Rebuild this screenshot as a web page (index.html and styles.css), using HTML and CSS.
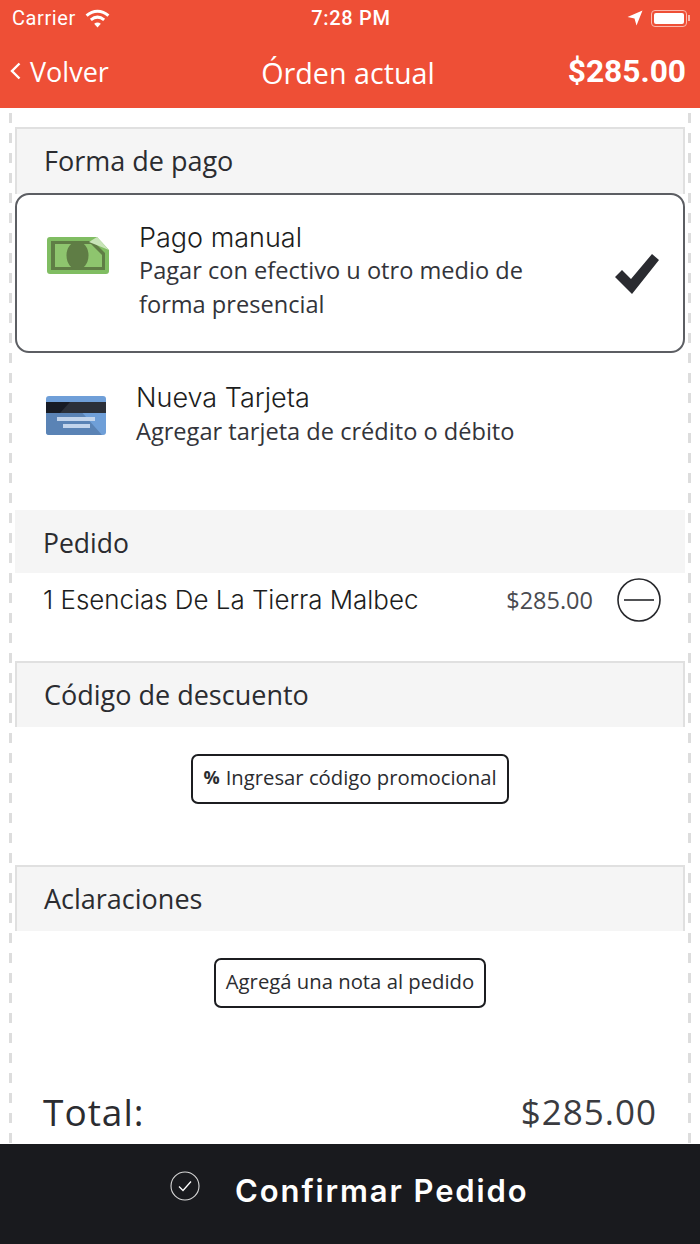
FILE: index.html
```html
<!DOCTYPE html>
<html lang="es">
<head>
    <meta charset="UTF-8">
    <meta name="viewport" content="width=device-width, initial-scale=1.0">
    <link rel="stylesheet" href="styles.css">
    <title>Órden actual</title>
</head>
<body>
  <div class="top">
    <div class="status">
      <div class="status-left">
        <span>Carrier</span>
        <svg class="wifi" width="25" height="19" viewBox="0 0 26 20">
          <path d="M1.5 7C8.5.8 17.5.8 24.5 7" fill="none" stroke="#fff" stroke-width="3.2"/>
          <path d="M6 11.5C10.5 7.8 15.5 7.8 20 11.5" fill="none" stroke="#fff" stroke-width="3.2"/>
          <path d="M9.5 15.5c2.3-1.6 4.7-1.6 7 0L13 19.5z" fill="#fff"/>
        </svg>
      </div>
      <div class="status-time">7:28 PM</div>
      <div class="status-right">
        <svg width="16" height="16" viewBox="0 0 16 16"><path d="M15.5.5L9.5 15.5 7.5 8.5.5 7z" fill="#fff"/></svg>
        <div class="battery"><div class="battery-fill"></div></div>
        <div class="battery-nub"></div>
      </div>
    </div>
    <div class="nav">
      <div class="nav-back">
        <svg width="11" height="18" viewBox="0 0 11 18"><path d="M9.5 1.5L2 9l7.5 7.500" fill="none" stroke="#fff" stroke-width="2.4"/></svg>
        <span>Volver</span>
      </div>
      <div class="nav-title">Órden actual</div>
      <div class="nav-price">$285.00</div>
    </div>
  </div>

  <div class="content">
    <div class="section-head">Forma de pago</div>

    <div class="pay-option selected">
      <svg class="pay-icon" width="62" height="37" viewBox="0 0 62 37">
        <path d="M3 0H50L62 13V34a3 3 0 0 1-3 3H3a3 3 0 0 1-3-3V3a3 3 0 0 1 3-3z" fill="#80bd62"/>
        <path d="M4 4H46L58 16V33H4z" fill="#5f7d45"/>
        <path d="M8 7H44L55 18V30H8z" fill="#8ec56e"/>
        <ellipse cx="30.5" cy="18.5" rx="11" ry="14" fill="#5f7d45"/>
        <path d="M50 0L62 13 42 5z" fill="#c8e4b8"/>
      </svg>
      <div class="pay-text">
        <div class="pay-title">Pago manual</div>
        <div class="pay-desc">Pagar con efectivo u otro medio de<br>forma presencial</div>
      </div>
      <svg class="pay-check" width="46" height="42" viewBox="0 0 46 42"><path d="M1 24L8 17 17 26 38 1 45 7 18 41z" fill="#2a2b30"/></svg>
    </div>

    <div class="pay-option plain">
      <svg class="pay-icon" width="60" height="39" viewBox="0 0 60 39">
        <rect width="60" height="39" rx="3" fill="#6f9fd8"/>
        <path d="M0 36V12H32L56 39H3a3 3 0 0 1-3-3z" fill="#5a83b5"/>
        <rect y="6" width="60" height="11" fill="#2b3039"/>
        <path d="M0 6H24L14 17H0z" fill="#171b24"/>
        <rect x="11" y="21" width="38" height="4" fill="#c3d5ec"/>
        <rect x="17" y="28" width="27" height="4" fill="#c3d5ec"/>
      </svg>
      <div class="pay-text">
        <div class="pay-title">Nueva Tarjeta</div>
        <div class="pay-desc">Agregar tarjeta de crédito o débito</div>
      </div>
    </div>

    <div class="section-head flat">Pedido</div>
    <div class="order-row">
      <div class="order-name">1 Esencias De La Tierra Malbec</div>
      <div class="order-price">$285.00</div>
      <svg width="44" height="44" viewBox="0 0 44 44">
        <circle cx="22" cy="22" r="21" fill="none" stroke="#26272b" stroke-width="1.6"/>
        <path d="M7 22H37" stroke="#26272b" stroke-width="1.6"/>
      </svg>
    </div>

    <div class="section-head">Código de descuento</div>
    <div class="action-row">
      <div class="action-btn"><b>%</b> Ingresar código promocional</div>
    </div>

    <div class="section-head">Aclaraciones</div>
    <div class="action-row">
      <div class="action-btn">Agregá una nota al pedido</div>
    </div>

    <div class="total-row">
      <span class="total-label">Total:</span>
      <span class="total-value">$285.00</span>
    </div>
  </div>

  <div class="confirm">
    <svg class="confirm-icon" width="30" height="30" viewBox="0 0 30 30">
      <circle cx="15" cy="15" r="14" fill="none" stroke="#d8d8d8" stroke-width="1.1"/>
      <path d="M9 15.5l4 4 8-9" fill="none" stroke="#fff" stroke-width="1.3"/>
    </svg>
    <span>Confirmar Pedido</span>
  </div>
</body>
</html>
```

FILE: styles.css
```css
* {
    box-sizing: border-box;
}

html, body {
    margin: 0;
    height: 1244px;
    overflow: hidden;
}

body {
    background-color: #fff;
    color: #2b2c30;
    font-family: 'Open Sans', Arial, sans-serif;
    display: flex;
    flex-direction: column;
}

/* red header */
.top {
    background-color: #ee4f36;
    color: #fff;
    height: 108px;
    flex: none;
}

.status {
    height: 36px;
    padding: 0 10px 0 12px;
    display: grid;
    grid-template-columns: 1fr auto 1fr;
    align-items: center;
    font-family: 'Roboto', Arial, sans-serif;
    font-size: 20px;
    letter-spacing: .6px;
}

.status-left {
    display: flex;
    align-items: center;
    gap: 9px;
}

.status-time {
    font-size: 20px;
    font-weight: 500;
    letter-spacing: .7px;
}

.status-right {
    display: flex;
    align-items: center;
    justify-content: flex-end;
    gap: 8px;
}

.battery {
    width: 36px;
    height: 17px;
    padding: 2px;
    border: 1px solid #fbb9ae;
    border-radius: 4px;
}

.battery-fill {
    height: 100%;
    background-color: #fff;
    border-radius: 2px;
}

.battery-nub {
    width: 2px;
    height: 6px;
    margin-left: -7px;
    background-color: #fbb9ae;
}

.nav {
    height: 70px;
    padding: 0 14px 0 10px;
    display: grid;
    grid-template-columns: 1fr auto 1fr;
    align-items: center;
}

.nav-back {
    display: flex;
    align-items: center;
    gap: 9px;
    font-size: 27px;
}

.nav-title {
    padding-top: 2px;
    font-size: 28.7px;
}

.nav-price {
    text-align: right;
    font-family: 'Roboto', Arial, sans-serif;
    font-size: 31.7px;
    font-weight: 700;
}

/* scrolling part with the dashed rails */
.content {
    flex: 1;
    min-height: 0;
    overflow: hidden;
    padding: 19px 15px 0;
    background-image:
        repeating-linear-gradient(to bottom, #ddd 0, #ddd 10px, transparent 10px, transparent 20px),
        repeating-linear-gradient(to bottom, #ddd 0, #ddd 10px, transparent 10px, transparent 20px);
    background-size: 3px 100%;
    background-position: 9px 5px, 688px 5px;
    background-repeat: no-repeat;
}

.section-head {
    height: 66px;
    padding: 0 0 2px 27px;
    display: flex;
    align-items: center;
    background-color: #f5f5f5;
    border: 2px solid #e0e0e0;
    border-bottom: 0;
    font-size: 27px;
}

.section-head:first-child {
    height: 67px;
}

.section-head.flat {
    height: 63px;
    padding: 2px 0 0 28px;
    border: 0;
    font-size: 26.5px;
}

.pay-option {
    display: flex;
    align-items: flex-start;
}

.pay-option.selected {
    height: 160px;
    margin-top: -1px;
    padding: 27px 23px 0 30px;
    border: 2px solid #5c5e63;
    border-radius: 14px;
}

.pay-option.plain {
    height: 157px;
    padding: 29px 0 0 31px;
}

.pay-icon {
    flex: none;
    margin-top: 15px;
}

.plain .pay-icon {
    margin-top: 14px;
}

.pay-text {
    margin-left: 30px;
}

.pay-title {
    font-family: 'Inter', Arial, sans-serif;
    font-size: 27px;
    font-weight: 300;
    line-height: 32px;
    color: #1c1d20;
}

.pay-desc {
    margin-top: -1px;
    font-size: 23.6px;
    line-height: 34px;
    color: #33343a;
}

.plain .pay-desc {
    margin-top: 0;
}

.pay-check {
    margin-left: auto;
    margin-top: 31px;
}

.order-row {
    height: 88px;
    padding: 5px 24px 0 28px;
    display: flex;
    align-items: flex-start;
}

.order-name {
    flex: 1;
    font-family: 'Inter', Arial, sans-serif;
    font-size: 25.9px;
    font-weight: 300;
    line-height: 44px;
    color: #1c1d20;
}

.order-price {
    margin-right: 24px;
    font-size: 23.5px;
    line-height: 44px;
    color: #4a4b50;
}

.action-row {
    height: 138px;
    padding-top: 27px;
    display: flex;
    justify-content: center;
    align-items: flex-start;
}

.action-btn {
    height: 50px;
    padding: 0 10px 5px;
    display: flex;
    align-items: center;
    gap: 6px;
    border: 2px solid #1c1d20;
    border-radius: 7px;
    font-size: 20.3px;
}

.action-btn b {
    font-size: 18px;
}

.total-row {
    margin-top: 17px;
    padding: 0 28px;
    display: flex;
    justify-content: space-between;
    align-items: center;
}

.total-label {
    font-size: 37px;
    letter-spacing: 1px;
}

.total-value {
    font-size: 35px;
    letter-spacing: 1px;
    color: #3a3b40;
}

/* confirm bar */
.confirm {
    flex: none;
    height: 100px;
    padding: 0 0 8px 170px;
    display: flex;
    align-items: center;
    gap: 35px;
    background-color: #191a1e;
    color: #fff;
    font-family: 'Inter', Arial, sans-serif;
    font-size: 31px;
    font-weight: 600;
    letter-spacing: 1.9px;
}

.confirm-icon {
    margin-top: -8px;
}
```
